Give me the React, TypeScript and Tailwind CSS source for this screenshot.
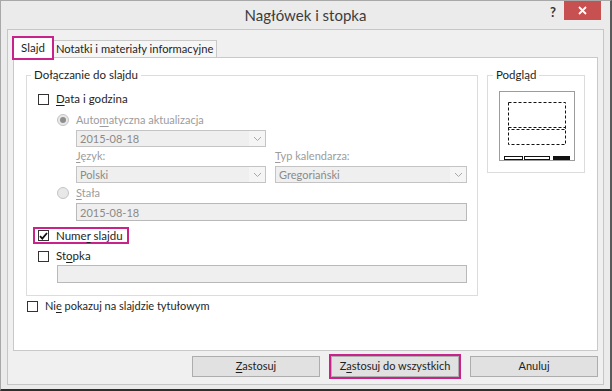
import React from "react";

const font = { fontFamily: 'Lato, "Noto Sans", sans-serif' };

function Chevron() {
  return (
    <svg width="9" height="6" viewBox="0 0 9 6" fill="none">
      <path d="M1 1l3.5 3.5L8 1" stroke="#a8a8a8" strokeWidth="1" />
    </svg>
  );
}

function Combo({ value, className }: { value: string; className: string }) {
  return (
    <div className={`flex h-[17px] items-center border border-[#c4c4c4] bg-[#efefef] text-[#8a8a8a] ${className}`}>
      <span className="flex-1 pl-[3px] leading-none">{value}</span>
      <span className="flex h-full w-[16px] items-center justify-center bg-[#f5f5f5]">
        <Chevron />
      </span>
    </div>
  );
}

function Field({ value, className }: { value?: string; className: string }) {
  return (
    <div className={`flex h-[18px] items-center border border-[#b9b9b9] bg-[#efefef] pl-[3px] leading-none text-[#8a8a8a] ${className}`}>
      {value}
    </div>
  );
}

function Box({ checked }: { checked?: boolean }) {
  return (
    <span className="flex h-[11px] w-[11px] shrink-0 items-center justify-center border border-[#333] bg-white">
      {checked && (
        <svg width="9" height="8" viewBox="0 0 9 8" fill="none">
          <path d="M1 4.2l2.3 2.4L8 1" stroke="#111" strokeWidth="1.8" />
        </svg>
      )}
    </span>
  );
}

function Radio({ on }: { on?: boolean }) {
  return (
    <span className="flex h-[12px] w-[12px] shrink-0 items-center justify-center rounded-full border border-[#c4c4c4] bg-[#e8e8e8]">
      {on && <span className="h-[6px] w-[6px] rounded-full bg-[#8e8e8e]" />}
    </span>
  );
}

function Preview() {
  return (
    <svg width="76" height="70" viewBox="0 0 76 70">
      <rect x="0.5" y="0.5" width="75" height="69" fill="#fff" stroke="#9c9c9c" />
      <g fill="none" stroke="#111" strokeWidth="1" strokeDasharray="3 2">
        <rect x="9.5" y="11.5" width="57" height="27" />
        <rect x="9.5" y="36.5" width="57" height="17" />
      </g>
      <rect x="5.5" y="65.5" width="18" height="3" fill="#fff" stroke="#111" />
      <rect x="25.5" y="65.5" width="25" height="3" fill="#fff" stroke="#111" />
      <rect x="54" y="65" width="17" height="4" fill="#111" />
    </svg>
  );
}

export default function App() {
  return (
    <div
      style={font}
      className="flex h-[391px] w-[612px] flex-col border-t border-l border-b-2 border-r-2 border-t-[#a8a8a8] border-l-[#a8a8a8] border-b-[#2e2e2e] border-r-[#5a5a5a] bg-[#ebebeb] text-[11px] text-[#1e1e1e]"
    >
      {/* title bar */}
      <div className="grid h-[28px] shrink-0 grid-cols-[1fr_auto_1fr]">
        <div />
        <div className="pt-[3px] text-[15px] leading-[22px] text-[#3c3c3c]">Nagłówek i stopka</div>
        <div className="flex items-start justify-end pr-[9px]">
          <span className="mt-[3px] mr-[8px] text-[13px] font-bold leading-[16px] text-[#333]">?</span>
          <span className="flex h-[19px] w-[37px] items-center justify-center bg-[#c75050]">
            <svg width="9" height="9" viewBox="0 0 9 9">
              <path d="M1 1l7 7M8 1l-7 7" stroke="#fff" strokeWidth="1.8" />
            </svg>
          </span>
        </div>
      </div>

      {/* client area */}
      <div className="mx-[6px] mb-[4px] flex flex-1 flex-col border border-[#c6c6c6] bg-[#f0f0f0]">
        {/* tabs */}
        <div className="flex h-[27px] shrink-0 items-end pl-[5px]">
          <div className="relative z-10 -mb-[1px] flex h-[21px] w-[40px] items-center justify-center border border-b-0 border-[#c9c9c9] bg-white text-[11.5px]">
            Slajd
            <span className="absolute -top-[2px] -right-[2px] -bottom-[2px] -left-[2px] border-2 border-[#c8238a]" />
          </div>
          <div className="flex h-[17px] shrink-0 items-center whitespace-nowrap border border-b-0 border-l-0 border-[#c9c9c9] bg-[#f6f6f6] px-[3px] text-[11.2px]">
            Notatki i materiały informacyjne
          </div>
        </div>

        {/* panel */}
        <div className="mx-[5px] flex h-[294px] shrink-0 flex-col border border-[#c9c9c9] bg-white pl-[12px]">
          <div className="mt-[17px] flex gap-[9px]">
            {/* Dołączanie do slajdu */}
            <div className="flex h-[221px] w-[452px] flex-col border border-[#dcdcdc]">
              <div className="-mt-[9px] ml-[4px] h-[16px] w-fit bg-white px-[3px] text-[11.5px] leading-[16px]">Dołączanie do slajdu</div>

              <div className="mt-[8px] ml-[11px] flex h-[16px] items-center text-[11.5px]">
                <Box />
                <span className="ml-[7px]">
                  <u className="underline-offset-2">D</u>ata i godzina
                </span>
              </div>

              <div className="mt-[5px] ml-[30px] flex h-[16px] items-center text-[#9c9c9c]">
                <Radio on />
                <span className="ml-[7px]">
                  Auto<u className="underline-offset-2">m</u>atyczna aktualizacja
                </span>
              </div>

              <Combo value="2015-08-18" className="mt-[2px] ml-[49px] w-[190px]" />

              <div className="mt-[1px] flex h-[16px] items-center text-[#9c9c9c]">
                <span className="ml-[49px] w-[199px]">
                  <u className="underline-offset-2">J</u>ęzyk:
                </span>
                <span>
                  <u className="underline-offset-2">T</u>yp kalendarza:
                </span>
              </div>

              <div className="mt-[2px] flex">
                <Combo value="Polski" className="ml-[49px] w-[190px]" />
                <Combo value="Gregoriański" className="ml-[9px] w-[192px]" />
              </div>

              <div className="mt-[2px] ml-[30px] flex h-[16px] items-center text-[#9c9c9c]">
                <Radio />
                <span className="ml-[7px]">
                  <u className="underline-offset-2">S</u>tała
                </span>
              </div>

              <Field value="2015-08-18" className="mt-[2px] ml-[49px] w-[391px]" />

              <div className="mt-[6px] ml-[6px] flex h-[17px] w-[96px] items-center whitespace-nowrap border-2 border-[#c8238a] pl-[3px] text-[11.5px]">
                <Box checked />
                <span className="ml-[7px]">
                  Nume<u className="underline-offset-2">r</u> slajdu
                </span>
              </div>

              <div className="mt-[4px] ml-[11px] flex h-[16px] items-center text-[11.5px]">
                <Box />
                <span className="ml-[7px]">
                  St<u className="underline-offset-2">o</u>pka
                </span>
              </div>

              <Field className="mt-[1px] ml-[30px] w-[410px]" />
            </div>

            {/* Podgląd */}
            <div className="flex h-[98px] w-[98px] flex-col border border-[#dcdcdc]">
              <div className="-mt-[9px] ml-[5px] h-[16px] w-fit bg-white px-[3px] text-[11.5px] leading-[16px]">Podgląd</div>
              <div className="mt-[8px] ml-[11px]">
                <Preview />
              </div>
            </div>
          </div>

          <div className="mt-[2px] ml-[1px] flex h-[16px] items-center">
            <Box />
            <span className="ml-[7px]">
              Ni<u className="underline-offset-2">e</u> pokazuj na slajdzie tytułowym
            </span>
          </div>
        </div>

        {/* buttons */}
        <div className="mt-[5px] flex justify-end gap-[11px] pr-[5px]">
          <button className="h-[21px] w-[128px] border border-[#adadad] bg-[#e1e1e1] text-[#1e1e1e]">
            <u className="underline-offset-2">Z</u>astosuj
          </button>
          <button className="h-[21px] w-[128px] border border-[#adadad] bg-[#e1e1e1] text-[#1e1e1e] outline-2 outline-[#c8238a]">
            Z<u className="underline-offset-2">a</u>stosuj do wszystkich
          </button>
          <button className="h-[21px] w-[128px] border border-[#adadad] bg-[#e1e1e1] text-[#1e1e1e]">Anuluj</button>
        </div>
      </div>
    </div>
  );
}
